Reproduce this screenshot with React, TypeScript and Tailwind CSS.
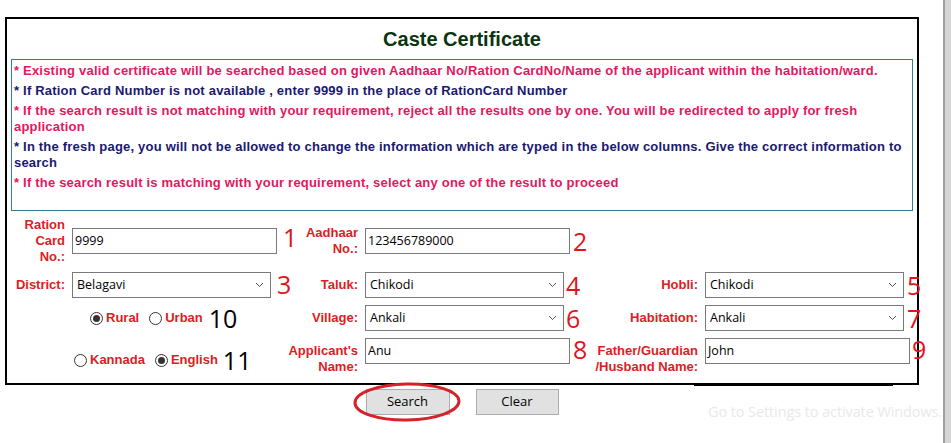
import React from "react";

function Num({ n, className = "" }: { n: string; className?: string }) {
  return (
    <span className={`font-['Open_Sans',sans-serif] text-[25px] leading-[26px] text-[#e1141c] ${className}`}>
      {n}
    </span>
  );
}

function Label({ children, className = "" }: { children: React.ReactNode; className?: string }) {
  return (
    <div className={`shrink-0 text-right text-[13px] font-bold leading-[16px] text-[#dd1c24] ${className}`}>
      {children}
    </div>
  );
}

function TextBox({ value, className = "" }: { value: string; className?: string }) {
  return (
    <div
      className={`flex h-[26px] w-[205px] shrink-0 items-center border border-[#7a7a7a] bg-white pl-[2px] font-['Open_Sans',sans-serif] text-[12.5px] text-black ${className}`}
    >
      {value}
    </div>
  );
}

function Select({ value, className = "" }: { value: string; className?: string }) {
  return (
    <div
      className={`flex h-[26px] w-[199px] shrink-0 items-center justify-between border border-[#7a7a7a] bg-white pl-[4px] pr-[5px] font-['Open_Sans',sans-serif] text-[12.5px] text-black ${className}`}
    >
      <span>{value}</span>
      <svg width="9" height="6" viewBox="0 0 9 6" className="mr-[1px]">
        <polyline points="1,1 4.5,4.5 8,1" fill="none" stroke="#555" strokeWidth="1" />
      </svg>
    </div>
  );
}

function Radio({ checked, label }: { checked?: boolean; label: string }) {
  return (
    <span className="flex items-center">
      <span className="flex h-[13px] w-[13px] items-center justify-center rounded-full border border-[#333] bg-white">
        {checked ? <span className="h-[7px] w-[7px] rounded-full bg-[#333]" /> : null}
      </span>
      <span className="ml-[3px] text-[13px] font-bold text-[#dd1c24]">{label}</span>
    </span>
  );
}

export default function App() {
  return (
    <div className="relative flex h-[443px] w-[951px] overflow-hidden bg-white font-['Liberation_Sans',Arial,sans-serif]">
      <div className="w-[943px] shrink-0 pl-[5px] pt-[17px]">
        <div className="relative h-[368px] w-[914px] border-2 border-black">
          <div className="flex h-[40px] items-center justify-center">
            <h1 className="text-[20px] font-bold leading-[24px] text-[#0b3410]">Caste Certificate</h1>
          </div>

          <div className="mx-[4px] h-[152px] border border-[#2f7f8f] pl-[2px] pt-[3px] text-[13px] font-bold leading-[16px] tracking-[0.2px]">
            <p className="mb-[4px] text-[#e2185e]">
              * Existing valid certificate will be searched based on given Aadhaar No/Ration CardNo/Name of the applicant within the habitation/ward.
            </p>
            <p className="mb-[4px] text-[#191970]">
              * If Ration Card Number is not available , enter 9999 in the place of RationCard Number
            </p>
            <p className="mb-[4px] text-[#e2185e]">
              * If the search result is not matching with your requirement, reject all the results one by one. You will be redirected to apply for fresh
              <br />
              application
            </p>
            <p className="mb-[4px] text-[#191970]">
              * In the fresh page, you will not be allowed to change the information which are typed in the below columns. Give the correct information to
              <br />
              search
            </p>
            <p className="mb-[4px] text-[#e2185e]">
              * If the search result is matching with your requirement, select any one of the result to proceed
            </p>
          </div>

          {/* Row 1 */}
          <div className="mt-[6px] flex h-[48px] items-center">
            <div className="flex w-[273px] shrink-0 items-center">
              <Label className="w-[58px]">
                Ration
                <br />
                Card
                <br />
                No.:
              </Label>
              <TextBox value="9999" className="ml-[7px]" />
              <Num n="1" className="-mt-[9px] ml-[6px]" />
            </div>
            <div className="flex w-[310px] shrink-0 items-center">
              <Label className="w-[78px] text-[#6b6b6b]">
                Aadhaar
                <br />
                No.:
              </Label>
              <TextBox value="123456789000" className="ml-[7px]" />
              <Num n="2" className="ml-[3px]" />
            </div>
          </div>

          {/* Row 2 */}
          <div className="mt-[7px] flex h-[26px] items-center">
            <div className="flex w-[273px] shrink-0 items-center">
              <Label className="w-[58px]">District:</Label>
              <Select value="Belagavi" className="ml-[7px]" />
              <Num n="3" className="-mt-[3px] ml-[6px]" />
            </div>
            <div className="flex w-[310px] shrink-0 items-center">
              <Label className="w-[78px]">Taluk:</Label>
              <Select value="Chikodi" className="ml-[7px]" />
              <Num n="4" className="ml-[2px]" />
            </div>
            <div className="flex shrink-0 items-center">
              <Label className="w-[108px]">Hobli:</Label>
              <Select value="Chikodi" className="ml-[7px]" />
              <Num n="5" className="ml-[3px]" />
            </div>
          </div>

          {/* Row 3 */}
          <div className="mt-[7px] flex h-[26px] items-center">
            <div className="flex w-[273px] shrink-0 items-center pl-[83px]">
              <Radio checked label="Rural" />
              <span className="ml-[10px]">
                <Radio label="Urban" />
              </span>
              <span className="ml-[6px] font-['Open_Sans',sans-serif] text-[25px] leading-[26px] text-black">10</span>
            </div>
            <div className="flex w-[310px] shrink-0 items-center">
              <Label className="w-[78px]">Village:</Label>
              <Select value="Ankali" className="ml-[7px]" />
              <Num n="6" className="ml-[2px]" />
            </div>
            <div className="flex shrink-0 items-center">
              <Label className="w-[108px]">Habitation:</Label>
              <Select value="Ankali" className="ml-[7px]" />
              <Num n="7" className="ml-[3px]" />
            </div>
          </div>

          {/* Row 4 */}
          <div className="mt-[7px] flex h-[35px] items-start">
            <div className="mt-[9px] flex w-[273px] shrink-0 items-center pl-[67px]">
              <Radio label="Kannada" />
              <span className="ml-[10px]">
                <Radio checked label="English" />
              </span>
              <span className="ml-[5px] font-['Open_Sans',sans-serif] text-[25px] leading-[26px] text-black">11</span>
            </div>
            <div className="flex w-[310px] shrink-0 items-start">
              <Label className="mt-[5px] w-[78px] leading-[15px]">
                Applicant&apos;s
                <br />
                Name:
              </Label>
              <TextBox value="Anu" className="ml-[7px]" />
              <Num n="8" className="-mt-[2px] ml-[3px]" />
            </div>
            <div className="flex shrink-0 items-start">
              <Label className="mt-[5px] w-[108px] leading-[15px]">
                Father/Guardian
                <br />
                /Husband Name:
              </Label>
              <TextBox value="John" className="ml-[7px]" />
              <Num n="9" className="-mt-[2px] ml-[2px]" />
            </div>
          </div>

          <div className="absolute -bottom-[3px] left-[687px] h-[2px] w-[199px] bg-black" />
        </div>

        <div className="mt-[4px] flex w-[914px] justify-center gap-[26px]">
          <div className="relative">
            <button className="h-[26px] w-[84px] border border-[#adadad] bg-[#e1e1e1] font-['Open_Sans',sans-serif] text-[13px] text-black">
              Search
            </button>
            <svg
              className="pointer-events-none absolute -left-[14px] -top-[7px]"
              width="110"
              height="42"
              viewBox="0 0 110 42"
            >
              <ellipse cx="55" cy="20" rx="52" ry="18" fill="none" stroke="#d2232a" strokeWidth="3" transform="rotate(-1 55 20)" />
            </svg>
          </div>
          <button className="h-[26px] w-[83px] border border-[#adadad] bg-[#e1e1e1] font-['Open_Sans',sans-serif] text-[13px] text-black">
            Clear
          </button>
        </div>
      </div>

      <div className="pointer-events-none absolute left-[708px] top-[401px] whitespace-nowrap font-['Open_Sans',sans-serif] text-[14.5px] tracking-[-0.1px] text-[#e9e9e9]">
        Go to Settings to activate Windows.
      </div>

      <div className="relative z-10 h-full w-[8px] shrink-0 border-l-2 border-[#a0a0a0] bg-[#d6d6d6]" />
    </div>
  );
}
